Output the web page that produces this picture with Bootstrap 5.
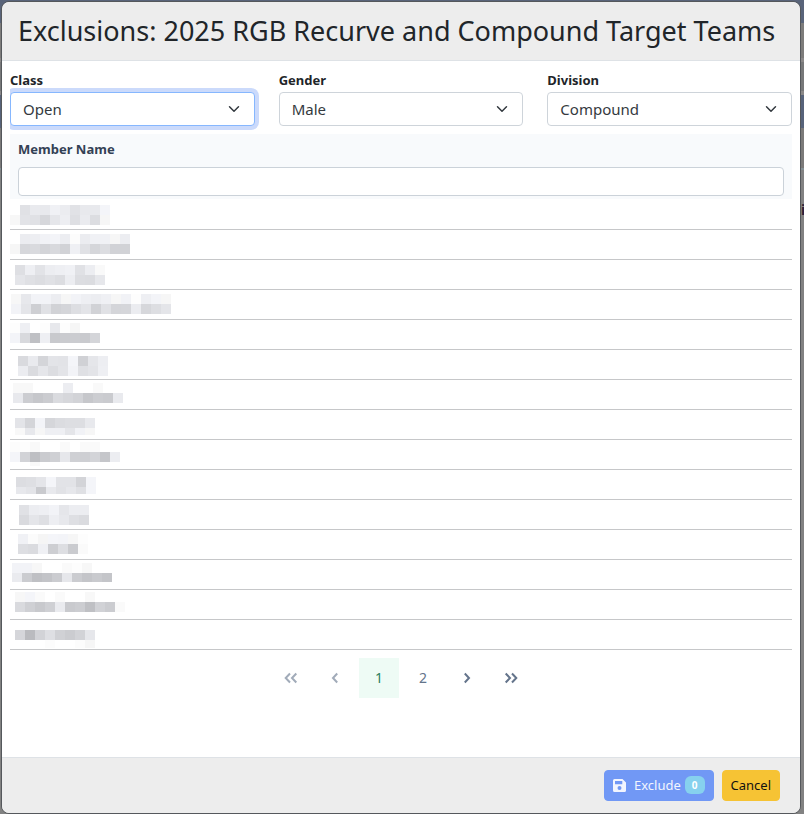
<!DOCTYPE html>
<html lang="en">
<head>
<meta charset="utf-8">
<meta name="viewport" content="width=device-width, initial-scale=1">
<title>Exclusions</title>
<link href="https://cdn.jsdelivr.net/npm/bootstrap@5.3.0/dist/css/bootstrap.min.css" rel="stylesheet">
<style>
  body {
    font-family: "Segoe UI", "Noto Sans", sans-serif;
    padding: 1px 3px 0 1px;
    background: linear-gradient(#59647a 0 23px, #7d7c7b 23px 58px, #8a8888 58px 62px, #777879 62px 91px, #8a8888 91px 95px, #57637a 95px 128px, #7b7a79 128px 168px, #849094 168px 170px, #828282 170px) no-repeat #828282;
  }
  .dialog-box { border: 1px solid #55585c; border-radius: 8px; min-height: calc(100vh - 1px); }
  .dialog-bar { background: #ededed; border-color: #dee2e6; }
  .dialog-bar.modal-header { padding: 12px 8px 12px 16px; }
  .dialog-bar.modal-footer { padding: 12px 20px; gap: 8px; }
  .dialog-bar.modal-footer > * { margin: 0; }
  .dialog-title { font-size: 27px; line-height: 34px; font-weight: 450; color: #212529; }
  .dialog-main { padding: 8px 8px 0; }
  .clip-area { overflow: hidden; }
  .field-label { font-size: 13px; line-height: 23px; font-weight: 700; color: #212529; display: block; }
  .field-select { font-size: 15px; line-height: 24px; padding: 4px 36px 4px 12px; color: #343a40; border-color: #ced4da; border-radius: 4px; }
  .field-select.is-active { border-color: #86b7fe; box-shadow: 0 0 0 4px #cbdafb; }
  .member-table { margin-top: 8px; }
  .member-table th { background: #f8fafc; padding: 4px 8px 3px; font-size: 13px; line-height: 22px; color: #334155; }
  .member-filter { height: 29px; min-height: 29px; margin-top: 7px; border-color: #cbd2d9; border-radius: 4px; }
  .member-table td { height: 30px; padding: 0; border-bottom: 1px solid #c6c7c9; }
  .member-table svg { display: block; }
  .pager { gap: 4px; margin: 8px 0 59px; }
  .pager button { width: 40px; height: 40px; padding: 0; font-size: 14px; line-height: 20px; color: #64748b; border: 0; border-radius: 0; background: transparent; display: flex; align-items: center; justify-content: center; }
  .pager button:disabled { opacity: .6; }
  .pager button.is-current { background: #eefbf5; color: #2c7f5e; }
  .pager svg { fill: none; stroke: currentColor; stroke-width: 2; }
  .action-btn { font-size: 13px; line-height: 21px; padding: 4px 8px; border-radius: 4px; display: flex; align-items: center; }
  .btn-exclude, .btn-exclude:disabled { background: #7198f5; border-color: #7198f5; color: #f2f5fe; opacity: 1; }
  .btn-cancel { background: #f6c334; border-color: #f6c334; color: #111; }
  .count-pill { background: #86d1ee; color: #fff; font-size: 10px; line-height: 10px; padding: 4px 7px; border-radius: 6px; margin-left: 4px; }
  .page-behind { position: absolute; top: 199px; right: 0; font-size: 14px; font-weight: 700; color: #2b1f35; width: 3px; overflow: hidden; }
</style>
</head>
<body>
<span class="page-behind" aria-hidden="true">i</span>
<main class="dialog-box modal-content position-relative bg-white d-flex flex-column overflow-hidden" role="dialog" aria-labelledby="dlgTitle">
  <header class="modal-header dialog-bar border-bottom">
    <h1 class="dialog-title modal-title" id="dlgTitle">Exclusions: 2025 RGB Recurve and Compound Target Teams</h1>
  </header>
  <div class="dialog-main flex-grow-1">
    <div class="clip-area">
      <div class="row gx-4">
        <div class="col">
          <label class="field-label" for="cls">Class</label>
          <select id="cls" class="form-select field-select is-active"><option>Open</option></select>
        </div>
        <div class="col">
          <label class="field-label" for="gender">Gender</label>
          <select id="gender" class="form-select field-select"><option>Male</option></select>
        </div>
        <div class="col">
          <label class="field-label" for="division">Division</label>
          <select id="division" class="form-select field-select"><option>Compound</option></select>
        </div>
      </div>
      <table class="member-table w-100">
        <thead>
          <tr><th scope="col"><label class="d-block" for="memberFilter">Member Name</label><input id="memberFilter" type="text" class="form-control form-control-sm member-filter"></th></tr>
        </thead>
        <tbody id="members"></tbody>
      </table>
    </div>
    <nav class="pager d-flex justify-content-center" aria-label="Pages">
      <button type="button" disabled aria-label="First page"><svg width="14" height="12" viewBox="0 0 14 12"><path d="M6 1.500 1.700 6 6 10.500M12.300 1.500 8 6l4.300 4.500"/></svg></button>
      <button type="button" disabled aria-label="Previous page"><svg width="8" height="12" viewBox="0 0 8 12"><path d="M6.200 1.500 2 6l4.200 4.500"/></svg></button>
      <button type="button" class="is-current" aria-current="page">1</button>
      <button type="button">2</button>
      <button type="button" aria-label="Next page"><svg width="8" height="12" viewBox="0 0 8 12"><path d="M1.800 1.500 6 6l-4.200 4.500"/></svg></button>
      <button type="button" aria-label="Last page"><svg width="14" height="12" viewBox="0 0 14 12"><path d="M1.700 1.500 6 6l-4.300 4.500M8 1.500 12.300 6 8 10.500"/></svg></button>
    </nav>
  </div>
  <footer class="modal-footer dialog-bar border-top">
    <button type="button" class="btn btn-sm action-btn btn-exclude" disabled>
      <svg class="me-2" width="13" height="13" viewBox="0 0 13 13" aria-hidden="true"><path fill="currentColor" fill-rule="evenodd" d="M1.500 0h8L13 3.500v8a1.500 1.500 0 0 1-1.500 1.500h-10A1.500 1.500 0 0 1 0 11.500v-10A1.500 1.500 0 0 1 1.500 0ZM2 2v3.200h7.300V2ZM6.500 7a2 2 0 1 0 0 4 2 2 0 0 0 0-4Z"/></svg>
      Exclude<span class="count-pill badge">0</span>
    </button>
    <button type="button" class="btn btn-sm action-btn btn-cancel">Cancel</button>
  </footer>
</main>
<script>
  // Masked member names: left inset, top inset, last strip height, then strips of 10px tones.
  const masked = [
    [0, 6, 10, "ff e0 e9 e8 f0 eb e1 e8 e8 f4", "f7 e2 e0 d6 e5 ed de ea dc f6"],
    [0, 4, 10, "ff eb ed f1 f3 ec fc eb f0 f0 f6 ec", "f6 d6 d9 d3 d8 d1 ef e0 d5 dc d1 d1"],
    [5, 5, 10, "de ee e2 ec ee f0 e0 ec f9", "e4 df dc e0 dc ec dc db e6"],
    [1, 4, 10, "f7 e7 f2 f2 ec f6 f2 ee ec ef f6 f1 fd ee f3 f6", "f2 e4 ce e0 d1 d4 dd e3 d1 e0 d4 d5 eb d6 dd e4"],
    [0, 3, 10, "fd ee ff fd e7 fd f6", "f3 d8 bf ee c8 ca cb c9 d4"],
    [8, 6, 10, "d9 e9 d4 e3 e2 f4 d0 e5 ed", "eb da e5 dc e3 f2 df e3 ee"],
    [3, 3, 10, "f8 f8 ff ff ff ec ff ff f9", "e8 cc c6 cb da d6 d2 c6 cc ca e9"],
    [5, 8, 7, "e3 d4 f3 d5 db dd dd e8", "f8 e7 f6 ee ee e4 f1 f6"],
    [0, 2, 4, "fc fd f9 ff ff fa ff fa fa", "f4 d2 be ca cf e6 cf ce d3 c5 ec", "ff ff f9"],
    [6, 7, 7, "dc de e4 f4 e2 e2 d3 f4", "e7 e3 c9 e8 e1 e6 df f4"],
    [9, 5, 10, "e0 ec ee f2 e5 ec ec", "d9 e4 de ed e7 de da"],
    [8, 4, 10, "f0 fb f5 f4 f3 f6 fd", "dd da ef cd dd ca fa"],
    [2, 3, 9, "f2 f2 f7 ff ff fa fd f7", "ea cb bf c3 cb e6 cb c4 c9 c4"],
    [5, 2, 10, "f7 f4 fa ff fa ff ff f8", "d9 cf c8 cf ea c9 cc bf d1 cb fa"],
    [5, 10, 8, "d5 ba d2 de d0 cb d2 e6", "ff ff ff fc ff ff fc f6"]
  ];
  document.getElementById("members").innerHTML = masked.map(([left, top, last, ...strips]) => {
    const tiles = strips.map((strip, r) => strip.split(" ").map((hex, c) => {
      const v = parseInt(hex, 16), h = r === strips.length - 1 ? last : 10;
      const cool = v < 245 ? 1 : 0;
      return `<rect x="${left + c * 10}" y="${top + r * 10}" width="10" height="${h}" fill="rgb(${v},${v + cool},${v + cool * 5})"/>`;
    }).join("")).join("");
    return `<tr><td><svg width="180" height="29" role="img" aria-label="Hidden name" shape-rendering="crispEdges">${tiles}</svg></td></tr>`;
  }).join("");
</script>
<script src="https://cdn.jsdelivr.net/npm/bootstrap@5.3.0/dist/js/bootstrap.bundle.min.js"></script>
</body>
</html>
